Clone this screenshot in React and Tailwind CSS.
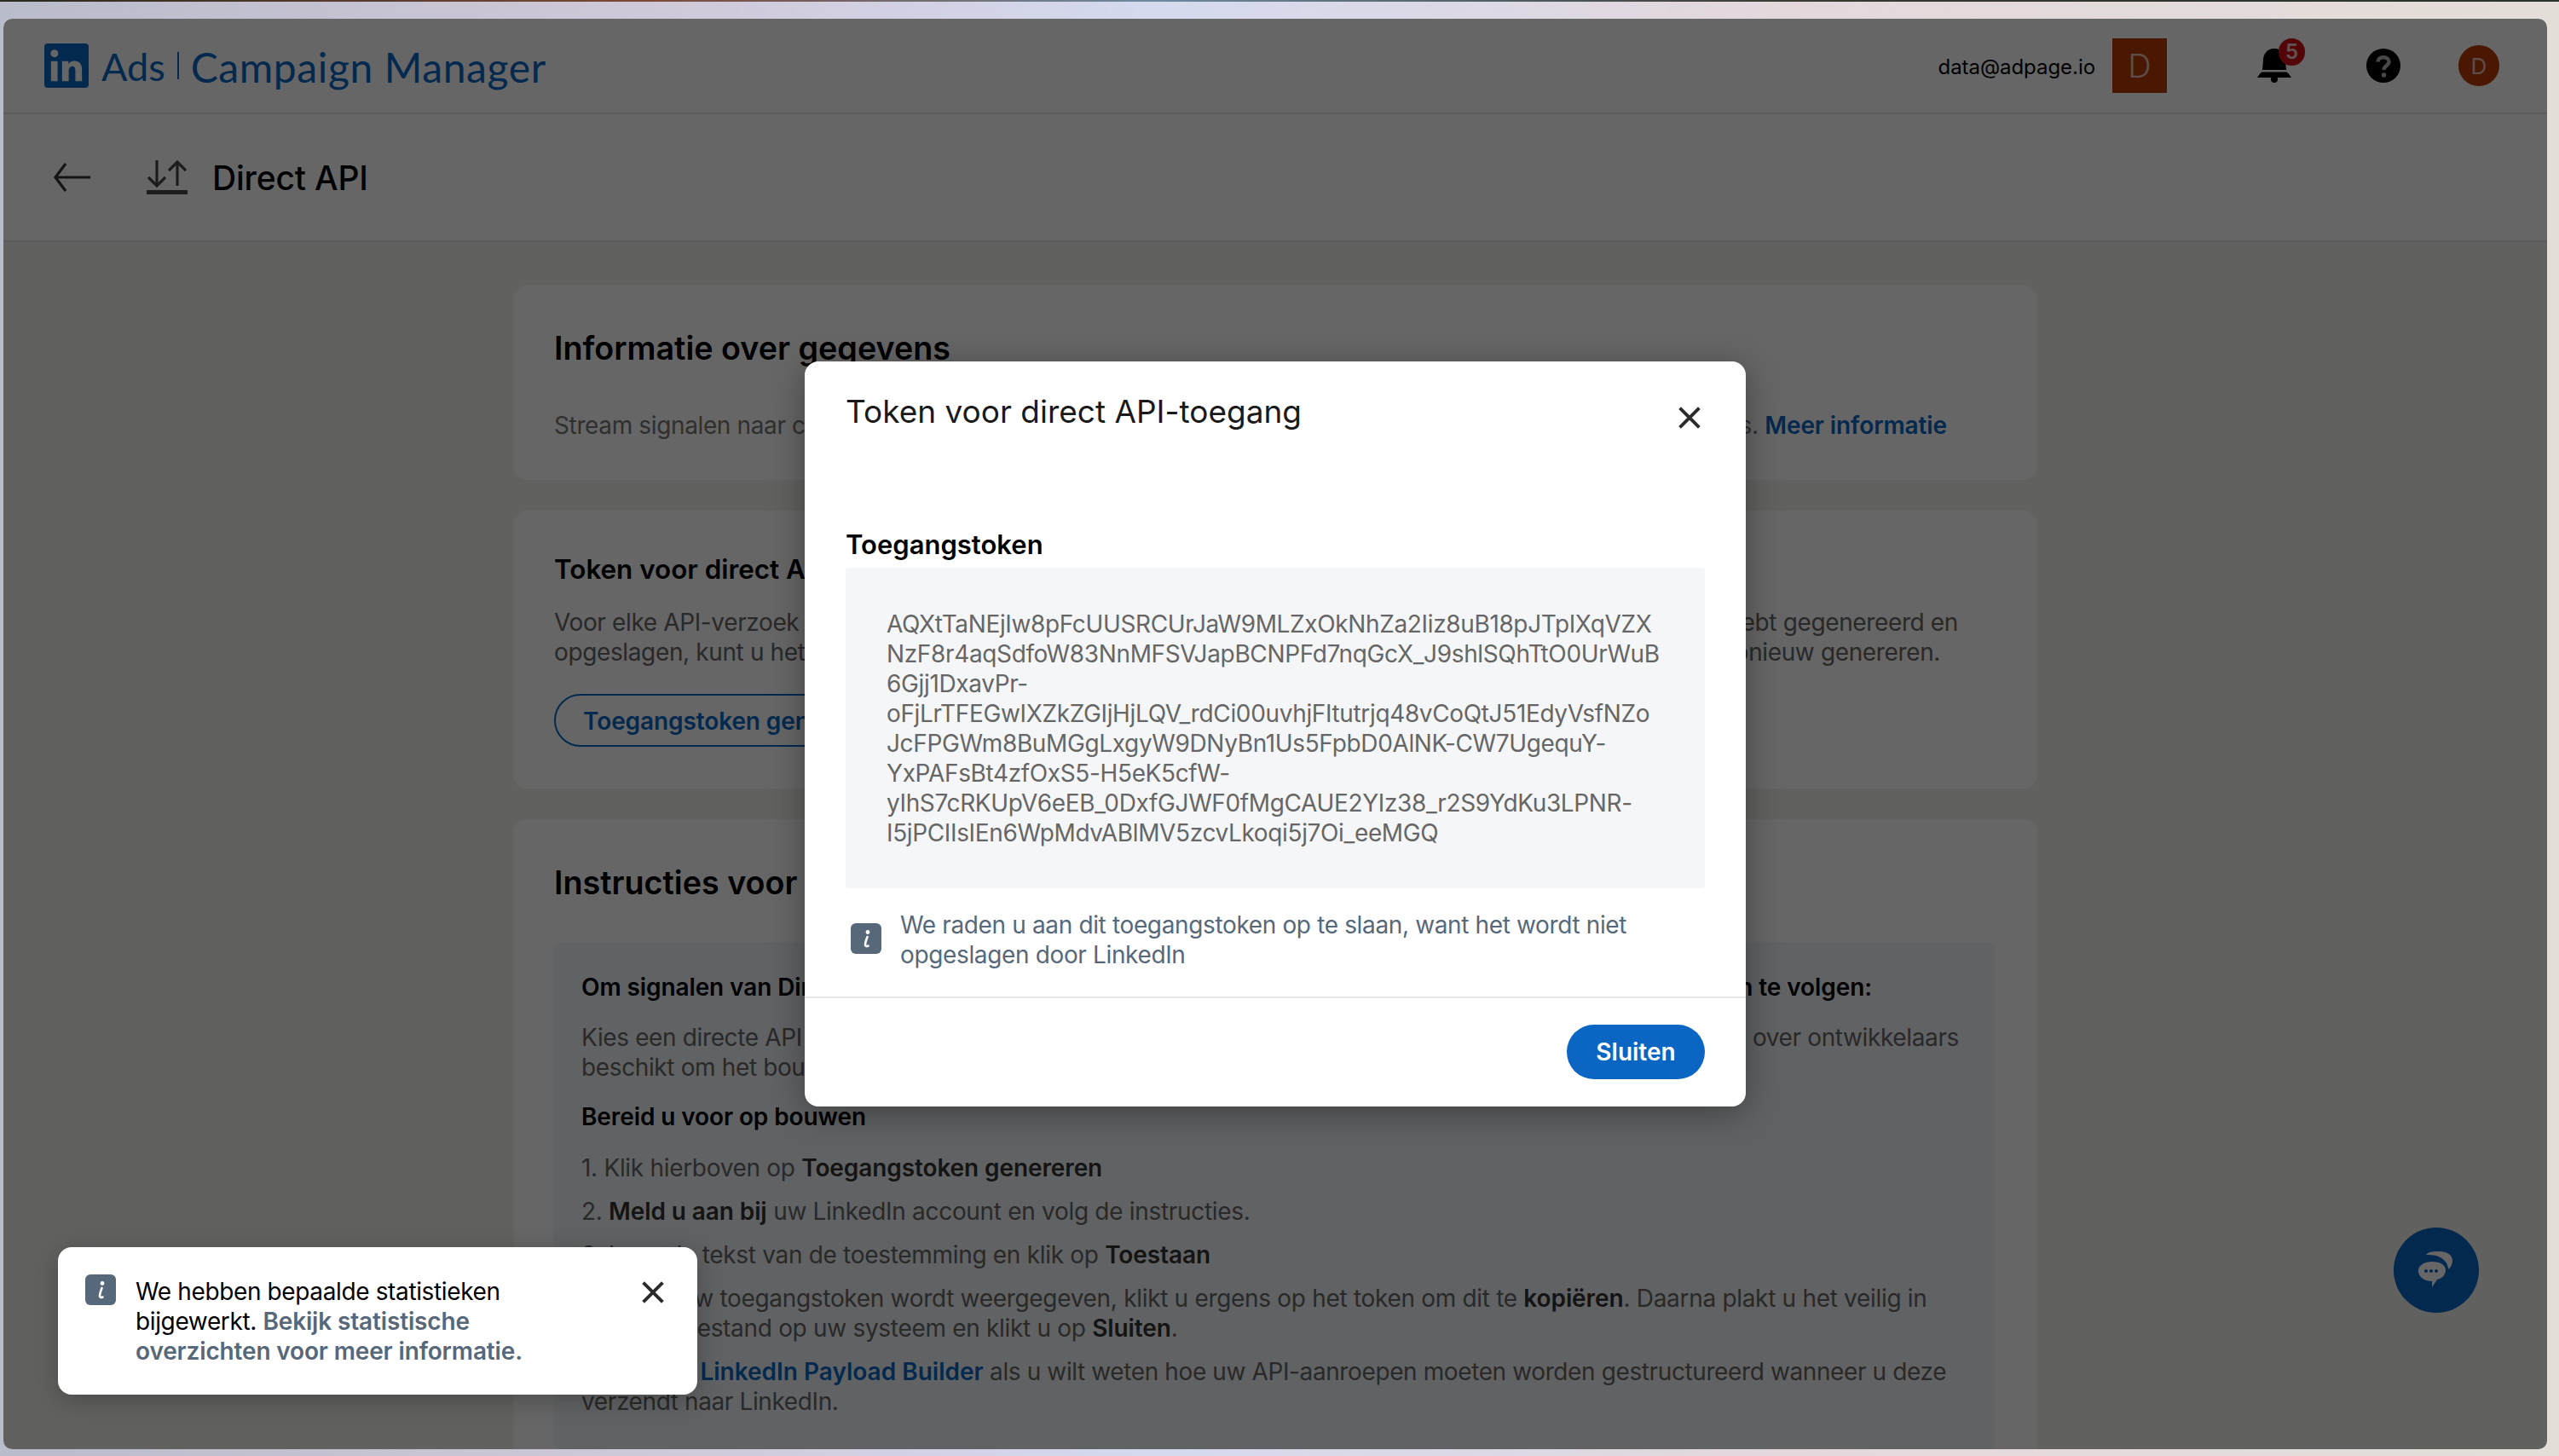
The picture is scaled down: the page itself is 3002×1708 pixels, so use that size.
import React from 'react';

const tokenLines = [
    'AQXtTaNEjIw8pFcUUSRCUrJaW9MLZxOkNhZa2Iiz8uB18pJTpIXqVZX',
    'NzF8r4aqSdfoW83NnMFSVJapBCNPFd7nqGcX_J9shlSQhTtO0UrWuB',
    '6Gjj1DxavPr-',
    'oFjLrTFEGwIXZkZGIjHjLQV_rdCi00uvhjFItutrjq48vCoQtJ51EdyVsfNZo',
    'JcFPGWm8BuMGgLxgyW9DNyBn1Us5FpbD0AlNK-CW7UgequY-',
    'YxPAFsBt4zfOxS5-H5eK5cfW-',
    'yIhS7cRKUpV6eEB_0DxfGJWF0fMgCAUE2YIz38_r2S9YdKu3LPNR-',
    'I5jPCIIsIEn6WpMdvABlMV5zcvLkoqi5j7Oi_eeMGQ',
];

const LinkedInBug = () => (
    <svg viewBox="2 2 20 20" className="w-[52px] h-[52px] shrink-0" fill="#0a66c2">
        <path d="M20.5 2h-17A1.5 1.5 0 002 3.5v17A1.5 1.5 0 003.5 22h17a1.5 1.5 0 001.5-1.5v-17A1.5 1.5 0 0020.5 2zM8 19H5v-9h3zM6.5 8.25A1.75 1.75 0 118.3 6.5a1.78 1.78 0 01-1.8 1.75zM19 19h-3v-4.74c0-1.42-.6-1.93-1.38-1.93A1.74 1.74 0 0013 14.19a.66.66 0 000 .14V19h-3v-9h2.9v1.3a3.11 3.11 0 012.7-1.4c1.55 0 3.36.86 3.36 3.66z" />
    </svg>
);

const InfoIcon = () => (
    <svg viewBox="0 0 36 36" className="w-[36px] h-[36px] shrink-0">
        <rect width="36" height="36" rx="6" fill="#56687a" />
        <circle cx="20" cy="10.5" r="2.4" fill="#fff" />
        <path d="M19.5 16 C18 20 17 23 17 25 C17 27 18.5 27.5 20.5 26.5" fill="none" stroke="#fff" strokeWidth="2.6" strokeLinecap="round" />
    </svg>
);

const CloseIcon = ({ className }) => (
    <svg viewBox="0 0 24 24" className={className} fill="none" stroke="currentColor" strokeWidth="3.6">
        <path d="M1.5 1.5 L22.5 22.5 M22.5 1.5 L1.5 22.5" />
    </svg>
);

const Strong = ({ children }) => <b className="font-semibold text-[#333] tracking-[-0.1px]">{children}</b>;

const Header = () => (
    <header className="h-[112px] flex items-center justify-between bg-white border-b-2 border-[#e3e3e3] pl-[48px] pr-[56px]">
        <div className="flex items-center text-[#0a66c2] font-[Lato,sans-serif] text-[45px]">
            <LinkedInBug />
            <span className="ml-[15px] mt-[3px]">Ads</span>
            <span className="ml-[14px] w-[2px] h-[32px] bg-[#0a66c2]" />
            <span className="ml-[14px] mt-[3px] text-[48px] tracking-[0.6px]">Campaign Manager</span>
        </div>
        <div className="flex items-center">
            <span className="mt-[3px] text-[24px] tracking-[-0.05px] text-black">data@adpage.io</span>
            <div className="ml-[20px] w-[64px] h-[64px] bg-[#b93a08] text-white/70 text-[38px] font-light flex items-center justify-center">D</div>
            <div className="relative ml-[106px] w-[40px] h-[40px]">
                <svg viewBox="0 0 40 40" className="w-[40px] h-[40px]" fill="#000">
                    <path d="M20 0 C11 0 7 7 7 14 L6 25 L34 25 L33 14 C33 7 29 0 20 0Z" />
                    <path d="M5.5 27.5 L34.5 27.5 C37 29.5 39 32 40 34 L0 34 C1 32 3 29.5 5.5 27.5Z" />
                    <circle cx="20" cy="36" r="4" />
                </svg>
                <div className="absolute -top-[12px] left-[25px] w-[31px] h-[32px] rounded-full bg-[#cc1016] text-white/80 text-[24px] font-semibold flex items-center justify-center">5</div>
            </div>
            <svg viewBox="0 0 40 40" className="ml-[88px] w-[40px] h-[40px]">
                <circle cx="20" cy="20" r="20" fill="#000" />
                <path d="M13.5 15.5 C13.5 8.5 26.5 8.5 26.5 15.5 C26.5 20 20.5 20 20.5 25" fill="none" stroke="#fff" strokeOpacity="0.7" strokeWidth="4.4" />
                <circle cx="20.5" cy="31" r="2.8" fill="#fff" fillOpacity="0.7" />
            </svg>
            <div className="ml-[68px] w-[48px] h-[48px] rounded-full bg-[#b93a08] text-white/70 text-[26px] flex items-center justify-center">D</div>
        </div>
    </header>
);

const SubHeader = () => (
    <div className="h-[150px] flex items-center bg-white border-b-2 border-[#e3e3e3] pl-[58px]">
        <svg viewBox="0 0 44 34" className="w-[44px] h-[34px]" fill="none" stroke="#333" strokeWidth="3.2">
            <path d="M44 17 L3 17 M15 1 L3 17 L15 33" />
        </svg>
        <svg viewBox="0 0 48 40" className="ml-[66px] w-[48px] h-[40px]" fill="none" stroke="#4a4a4a" strokeWidth="3.2">
            <path d="M12 0 L12 30 M2 20 L12 30 L22 20" />
            <path d="M36 30 L36 2 M26 12 L36 2 L46 12" />
            <path d="M0 37.5 L48 37.5" strokeWidth="5" />
        </svg>
        <h1 className="ml-[29px] mt-[2px] text-[39px] font-medium tracking-[-0.2px] text-black">Direct API</h1>
    </div>
);

const Instructions = () => (
    <section className="bg-white rounded-[16px] pt-[49px] pl-[48px] pr-[50px] pb-[40px]">
        <h2 className="text-[37.7px] leading-[50px] font-semibold text-black">Instructies voor Direct API</h2>
        <div className="mt-[45px] bg-[#f3f6f8] rounded-[8px] pt-[36px] px-[32px] pb-[40px] text-[28px] leading-[35px] tracking-[-0.37px] text-[#666]">
            <div className="flex justify-between pr-[112px] font-semibold tracking-[-0.1px] text-black">
                <span>Om signalen van Direct</span>
                <span>n te volgen:</span>
            </div>
            <div className="mt-[24px] flex justify-between pr-[10px]">
                <span>Kies een directe API</span>
                <span>over ontwikkelaars</span>
            </div>
            <div>beschikt om het bouwen</div>
            <div className="mt-[23px] font-semibold tracking-[-0.1px] text-black">Bereid u voor op bouwen</div>
            <ol className="mt-[25px] flex flex-col gap-[16px] tracking-[-0.31px]">
                <li>1. Klik hierboven op <Strong>Toegangstoken genereren</Strong></li>
                <li>2. <Strong>Meld u aan bij</Strong> uw LinkedIn account en volg de instructies.</li>
                <li>3. Lees de tekst van de toestemming en klik op <Strong>Toestaan</Strong></li>
                <li>4. Zodra uw toegangstoken wordt weergegeven, klikt u ergens op het token om dit te <Strong>kopiëren</Strong>. Daarna plakt u het veilig in<br />een tekstbestand op uw systeem en klikt u op <Strong>Sluiten</Strong>.</li>
                <li className="tracking-[-0.39px]">5. Gebruik <span className="font-semibold tracking-[0px] text-[#0a66c2]">LinkedIn Payload Builder</span> als u wilt weten hoe uw API-aanroepen moeten worden gestructureerd wanneer u deze<br />verzendt naar LinkedIn.</li>
            </ol>
        </div>
    </section>
);

const TokenModal = () => (
    <div className="w-[1104px] h-[874px] bg-white rounded-[16px] shadow-[0_8px_40px_rgba(0,0,0,0.35)] flex flex-col">
        <div className="flex justify-between pt-[32px] pl-[48px] pr-[53px]">
            <h2 className="text-[37px] leading-[54px] text-[#1a1a1a]">Token voor direct API-toegang</h2>
            <CloseIcon className="mt-[21px] w-[26px] h-[26px] text-[#2b2b2b]" />
        </div>
        <div className="px-[48px] mt-[109px]">
            <div className="text-[31px] leading-[40px] font-semibold text-black">Toegangstoken</div>
            <div className="mt-[7px] h-[376px] bg-[#f5f6f8] rounded-[4px] px-[48px] pt-[49px] text-[28px] leading-[35px] tracking-[-0.36px] text-[#666]">
                {tokenLines.map((line) => <div key={line}>{line}</div>)}
            </div>
            <div className="mt-[26px] flex items-center text-[28px] leading-[35px] tracking-[-0.36px] text-[#56687a]">
                <div className="ml-[6px] mb-[4px]"><InfoIcon /></div>
                <p className="ml-[22px]">We raden u aan dit toegangstoken op te slaan, want het wordt niet<br />opgeslagen door LinkedIn</p>
            </div>
        </div>
        <div className="mt-[31px] border-t-2 border-[#e8e8e8] flex justify-end pt-[31px] pr-[48px]">
            <button className="w-[162px] h-[64px] rounded-full bg-[#0a66c2] text-white text-[28px] font-semibold">Sluiten</button>
        </div>
    </div>
);

const Toast = () => (
    <div className="absolute left-[64px] bottom-[64px] w-[750px] h-[173px] bg-white rounded-[16px] shadow-[0_6px_30px_rgba(0,0,0,0.25)] flex pl-[32px] pt-[32px] text-[28px] leading-[35px] tracking-[-0.37px] text-black">
        <InfoIcon />
        <p className="ml-[23px] mt-[3px] w-[520px]">
            We hebben bepaalde statistieken bijgewerkt. <span className="font-semibold tracking-[-0.15px] text-[#56687a]">Bekijk statistische overzichten voor meer informatie.</span>
        </p>
        <CloseIcon className="absolute top-[40px] right-[39px] w-[26px] h-[26px] text-[#2b2b2b]" />
    </div>
);

const App = () => {
    return (
        <div className="relative w-[3002px] h-[1708px] overflow-hidden font-[Inter,sans-serif] bg-[linear-gradient(90deg,#b9bccb,#cfc8d8_25%,#d5daee_45%,#e4d8dc_70%,#e3ded8)]">
            <div className="h-[2px] bg-[linear-gradient(90deg,#2b2a1e,#7a4a3a_25%,#6d8aa0_45%,#3a3a30_70%,#27332e)]" />
            <div className="pt-[20px] pl-[4px]">
                <div className="relative w-[2984px] h-[1678px] overflow-hidden rounded-[10px] bg-[#f3f2ef]">
                    <Header />
                    <SubHeader />
                    <main className="w-[1788px] mx-auto pt-[51px] flex flex-col gap-[36px]">
                        <section className="bg-white rounded-[16px] pt-[48px] px-[48px] h-[228px]">
                            <h2 className="text-[37.7px] leading-[50px] font-semibold text-black">Informatie over gegevens</h2>
                            <div className="mt-[49px] flex justify-between pr-[58px] text-[28px] leading-[35px] tracking-[-0.37px] text-[#777]">
                                <span>Stream signalen naar conversies</span>
                                <span>gegevens. <span className="font-semibold tracking-[-0.1px] text-[#0a66c2]">Meer informatie</span></span>
                            </div>
                        </section>
                        <section className="bg-white rounded-[16px] pt-[49px] px-[48px] h-[326px]">
                            <h2 className="text-[31.4px] leading-[40px] font-semibold text-black">Token voor direct API-toegang</h2>
                            <div className="mt-[25px] pr-[45px] text-[28px] leading-[35px] tracking-[-0.37px] text-[#666]">
                                <div className="flex justify-between">
                                    <span>Voor elke API-verzoek is een</span>
                                    <span>hebt gegenereerd en</span>
                                </div>
                                <div className="flex justify-between pr-[21px]">
                                    <span>opgeslagen, kunt u het</span>
                                    <span>opnieuw genereren.</span>
                                </div>
                            </div>
                            <button className="mt-[31px] h-[62px] w-[440px] rounded-full border-2 border-[#0a66c2] text-[#0a66c2] text-[28px] tracking-[-0.1px] font-semibold text-left pl-[32px] pt-[2px]">Toegangstoken genereren</button>
                        </section>
                        <Instructions />
                    </main>
                    <div className="absolute right-[80px] bottom-[160px] w-[100px] h-[100px] rounded-full bg-[#0a66c2] flex items-center justify-center">
                        <svg viewBox="0 0 42 44" className="w-[42px] h-[44px]" fill="#fff">
                            <path d="M9 4 C12 0 18 0 24 0 C34 0 40 4 40 11 C40 15 38 19 35 21 C35 14 30 8 21 5 C17 4 13 4 9 4Z" />
                            <path fillRule="evenodd" d="M16 12 C26 12 32 16 32 22 C32 28 27 32 22 33 L16 42 L16 35 C6 35 0 29 0 23 C0 16 7 12 16 12Z M9 21 a2 2 0 1 0 .01 0Z M15 21 a2 2 0 1 0 .01 0Z M21 21 a2 2 0 1 0 .01 0Z" />
                        </svg>
                    </div>
                    <div className="absolute inset-0 bg-black/60" />
                    <div className="absolute inset-0 flex justify-center pt-[402px]">
                        <TokenModal />
                    </div>
                    <Toast />
                </div>
            </div>
        </div>
    );
};

export default App;
